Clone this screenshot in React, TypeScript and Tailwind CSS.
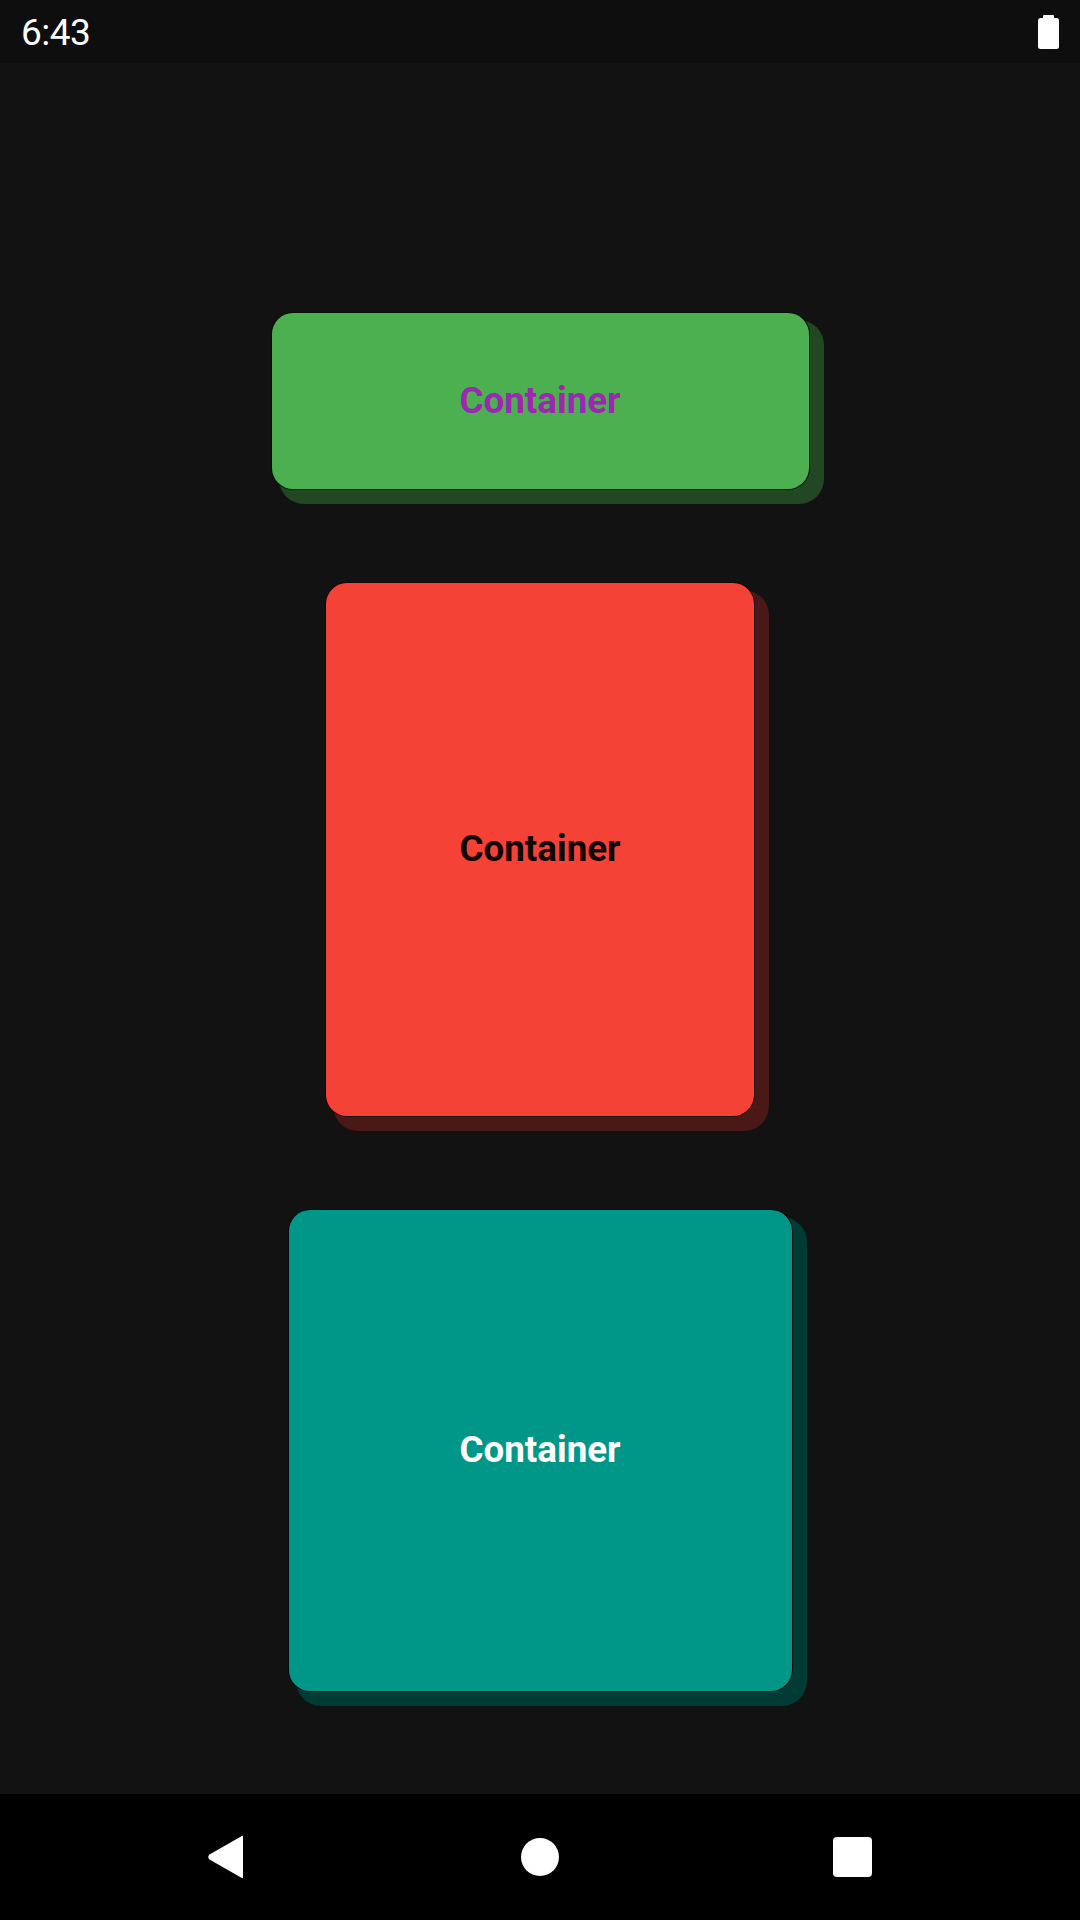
import React from 'react';

type CardProps = {
  width: string;
  height: string;
  bg: string;
  text: string;
  shadow: string;
};

function Card({ width, height, bg, text, shadow }: CardProps) {
  return (
    <div
      className={`${width} ${height} ${bg} ${shadow} rounded-[22px] border border-black/90 flex items-center justify-center`}
    >
      <span className={`${text} font-bold text-[36.75px] leading-none`}>Container</span>
    </div>
  );
}

export default function App() {
  return (
    <div
      className="w-[1080px] h-[1920px] flex flex-col bg-[#121212] overflow-hidden"
      style={{ fontFamily: 'Roboto, "Noto Sans", sans-serif' }}
    >
      {/* status bar */}
      <div className="h-[63px] shrink-0 bg-[#0e0e0e] flex items-center justify-between pl-[21px] pr-[21px]">
        <span className="text-white text-[37px] leading-none tracking-[-0.5px] pt-[2px]">6:43</span>
        <svg width="21" height="34" viewBox="0 0 21 34">
          <rect x="5" y="0" width="11" height="4" rx="1" fill="#fff" />
          <rect x="0" y="3" width="21" height="31" rx="2.5" fill="#fff" />
        </svg>
      </div>

      {/* content */}
      <div className="flex-1 flex flex-col items-center pt-[249px] gap-[92px]">
        <Card
          width="w-[539px]"
          height="h-[178px]"
          bg="bg-[#4caf50]"
          text="text-[#9c27b0]"
          shadow="shadow-[11px_11px_0_3px_#214822]"
        />
        <Card
          width="w-[430px]"
          height="h-[535px]"
          bg="bg-[#f44336]"
          text="text-[#120404]"
          shadow="shadow-[11px_11px_0_3px_#4b1818]"
        />
        <Card
          width="w-[505px]"
          height="h-[483px]"
          bg="bg-[#009688]"
          text="text-white"
          shadow="shadow-[11px_11px_0_3px_#003c35]"
        />
      </div>

      {/* nav bar */}
      <div className="h-[126px] shrink-0 bg-black flex items-center justify-center">
        <div className="w-[312px] flex justify-center">
          <svg width="37" height="44" viewBox="0 0 37 44" className="mr-[6px]">
            <path
              d="M36 2 L36 42 Q36 44 34 42.5 L2.5 24.5 Q0 22 2.5 19.5 L34 1.5 Q36 0 36 2 Z"
              fill="#fff"
            />
          </svg>
        </div>
        <div className="w-[312px] flex justify-center">
          <div className="w-[38px] h-[38px] rounded-full bg-white" />
        </div>
        <div className="w-[312px] flex justify-center">
          <div className="w-[39px] h-[40px] rounded-[4px] bg-white" />
        </div>
      </div>
    </div>
  );
}
